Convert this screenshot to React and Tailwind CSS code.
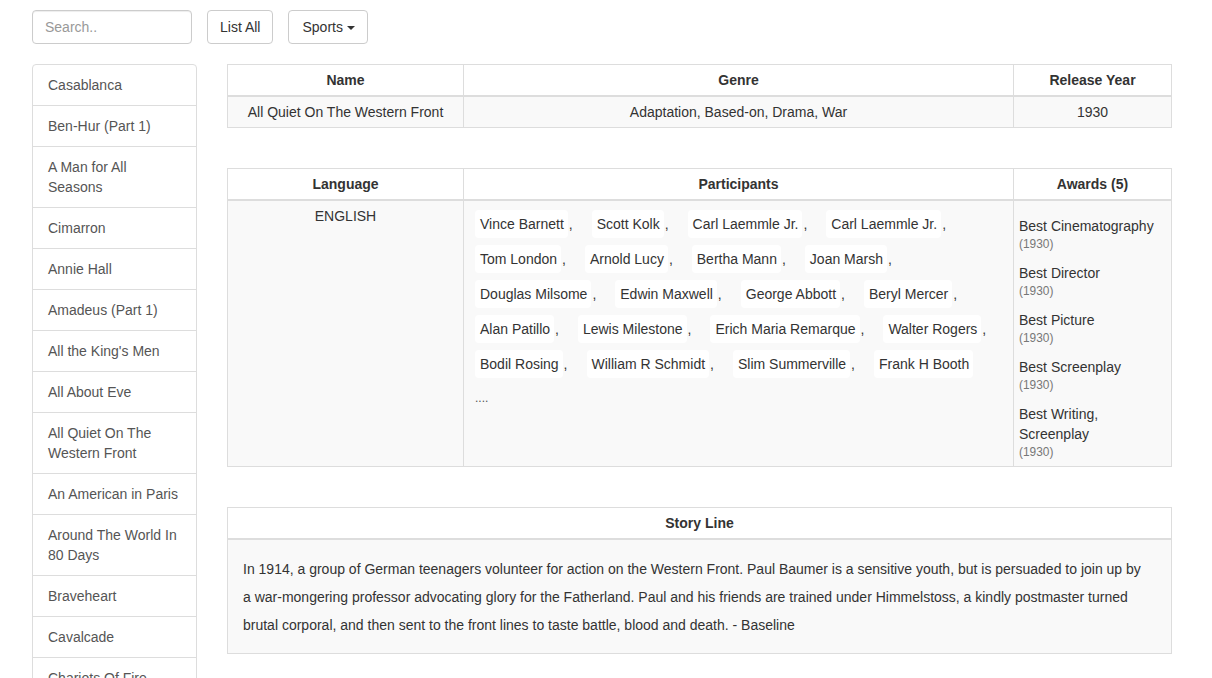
import React from "react";

const movies = [
  "Casablanca",
  "Ben-Hur (Part 1)",
  "A Man for All Seasons",
  "Cimarron",
  "Annie Hall",
  "Amadeus (Part 1)",
  "All the King's Men",
  "All About Eve",
  "All Quiet On The Western Front",
  "An American in Paris",
  "Around The World In 80 Days",
  "Braveheart",
  "Cavalcade",
  "Chariots Of Fire",
  "Chicago",
  "Dances With Wolves",
];

// participants grouped the way they wrap in the cell
const participants = [
  ["Vince Barnett", "Scott Kolk", "Carl Laemmle Jr.", "Carl Laemmle Jr."],
  ["Tom London", "Arnold Lucy", "Bertha Mann", "Joan Marsh"],
  ["Douglas Milsome", "Edwin Maxwell", "George Abbott", "Beryl Mercer"],
  ["Alan Patillo", "Lewis Milestone", "Erich Maria Remarque", "Walter Rogers"],
  ["Bodil Rosing", "William R Schmidt", "Slim Summerville", "Frank H Booth"],
];

const awards = [
  "Best Cinematography",
  "Best Director",
  "Best Picture",
  "Best Screenplay",
  "Best Writing, Screenplay",
];

function HeadRow({ cols }) {
  return (
    <div className="grid grid-cols-[235px_550px_158px] bg-white border-b-2 border-[#ddd] font-bold">
      {cols.map((c, i) => (
        <div
          key={c}
          className={`py-[5px] px-[5px] text-center leading-[20px] ${i > 0 ? "border-l border-[#ddd]" : ""}`}
        >
          {c}
        </div>
      ))}
    </div>
  );
}

export default function App() {
  return (
    <div
      className="min-h-screen bg-white text-[#333] text-[14px] leading-[20px] px-[32px] pt-[10px]"
      style={{ fontFamily: '"Liberation Sans", Arial, sans-serif' }}
    >
      {/* top bar */}
      <div className="flex items-center gap-[15px]">
        <input
          placeholder="Search.."
          className="w-[160px] h-[34px] px-[12px] border border-[#ccc] rounded-[4px] text-[14px] text-[#555] placeholder:text-[#999] shadow-[inset_0_1px_1px_rgba(0,0,0,0.075)] outline-none"
        />
        <button className="h-[34px] px-[12px] border border-[#ccc] rounded-[4px] bg-white text-[#333]">
          List All
        </button>
        <button className="h-[34px] pl-[13px] pr-[12px] border border-[#ccc] rounded-[4px] bg-white text-[#333] flex items-center gap-[4px]">
          Sports
          <span className="inline-block w-0 h-0 border-t-[4px] border-t-[#333] border-x-[4px] border-x-transparent mt-[1px]" />
        </button>
      </div>

      <div className="flex items-start gap-[30px] mt-[20px]">
        {/* sidebar */}
        <div className="w-[165px] shrink-0">
          {movies.map((m, i) => (
            <div
              key={m + i}
              className={`border border-[#ddd] -mb-px px-[15px] py-[10px] text-[#555] bg-white ${i === 0 ? "rounded-t-[4px]" : ""}`}
            >
              {m}
            </div>
          ))}
        </div>

        {/* main */}
        <div className="w-[945px] shrink-0">
          {/* summary */}
          <div className="border border-[#ddd]">
            <HeadRow cols={["Name", "Genre", "Release Year"]} />
            <div className="grid grid-cols-[235px_550px_158px] bg-[#f9f9f9]">
              <div className="p-[5px] text-center">All Quiet On The Western Front</div>
              <div className="p-[5px] text-center border-l border-[#ddd]">
                Adaptation, Based-on, Drama, War
              </div>
              <div className="p-[5px] text-center border-l border-[#ddd]">1930</div>
            </div>
          </div>

          {/* details */}
          <div className="border border-[#ddd] mt-[40px]">
            <HeadRow cols={["Language", "Participants", "Awards (5)"]} />
            <div className="grid grid-cols-[235px_550px_158px] bg-[#f9f9f9]">
              <div className="p-[5px] text-center">ENGLISH</div>
              <div className="border-l border-[#ddd] pt-[9px] pl-[11px] min-w-0">
                {participants.map((row, r) => (
                  <div key={r} className="flex flex-nowrap mb-[7px]">
                    {row.map((p, i) => {
                      const last = r === participants.length - 1 && i === row.length - 1;
                      return (
                        <div key={p + i} className="flex shrink-0 items-center mr-[19px] whitespace-nowrap">
                          <span className="bg-white rounded-[4px] pl-[5px] pr-[4px] h-[28px] leading-[28px]">
                            {p}
                          </span>
                          {!last && <span className="ml-px">,</span>}
                        </div>
                      );
                    })}
                  </div>
                ))}
                <div className="mt-[10px] text-[12px] text-[#555]">....</div>
              </div>
              <div className="border-l border-[#ddd] pt-[15px] pb-[5px] px-[5px]">
                {awards.map((a, i) => (
                  <div key={a} className={i < awards.length - 1 ? "mb-[10px]" : ""}>
                    <div>{a}</div>
                    <div className="text-[11.9px] leading-[17px] text-[#777]">(1930)</div>
                  </div>
                ))}
              </div>
            </div>
          </div>

          {/* story */}
          <div className="border border-[#ddd] mt-[40px]">
            <div className="bg-white border-b-2 border-[#ddd] font-bold text-center py-[5px]">
              Story Line
            </div>
            <div className="bg-[#f9f9f9] pt-[15px] pb-[14px] px-[15px] leading-[28px]">
              In 1914, a group of German teenagers volunteer for action on the Western Front. Paul
              Baumer is a sensitive youth, but is persuaded to join up by
              <br />
              a war-mongering professor advocating glory for the Fatherland. Paul and his friends
              are trained under Himmelstoss, a kindly postmaster turned
              <br />
              brutal corporal, and then sent to the front lines to taste battle, blood and death. -
              Baseline
            </div>
          </div>
        </div>
      </div>
    </div>
  );
}
